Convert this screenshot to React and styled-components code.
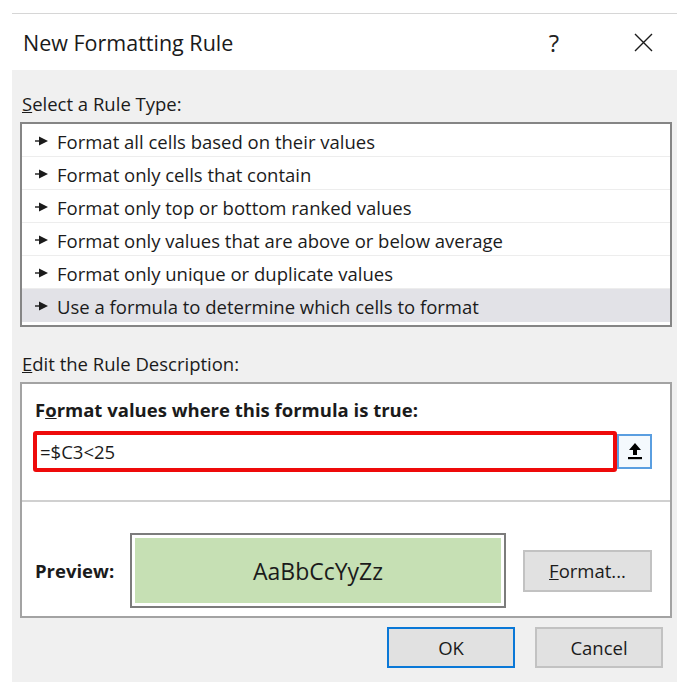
import React from 'react';
import styled, { createGlobalStyle } from 'styled-components';

const GlobalStyle = createGlobalStyle`
  body {
    margin: 0;
    background: #ffffff;
    font-family: "Open Sans", "Noto Sans", sans-serif;
    color: #1b1b1b;
  }
`;

const Page = styled.div`
  padding: 13px 8px 0 12px;
`;

const Dialog = styled.div`
  width: 665px;
  height: 669px;
  display: flex;
  flex-direction: column;
  border-top: 1px solid #d6d6d6;
  box-sizing: border-box;
`;

const TitleBar = styled.div`
  height: 56px;
  background: #ffffff;
  display: flex;
  align-items: center;
  padding-left: 11px;
  padding-right: 24px;
  flex-shrink: 0;
`;

const Title = styled.div`
  flex: 1;
  font-size: 21.5px;
  color: #1a1a1a;
`;

const Help = styled.div`
  font-size: 24px;
  color: #222;
  width: 24px;
  text-align: center;
  margin-right: 68px;
`;

const CloseIcon = styled.svg`
  width: 19px;
  height: 19px;
  display: block;
`;

const Body = styled.div`
  flex: 1;
  background: #f0f0f0;
  padding: 0 5px 0 8px;
  display: flex;
  flex-direction: column;
`;

const SectionLabel = styled.div`
  font-size: 18.5px;
  line-height: 22px;
  margin-top: ${(p) => p.$top}px;
  margin-left: 2px;
  margin-bottom: 7px;
  color: #1b1b1b;
`;

const ListBox = styled.div`
  height: 205px;
  box-sizing: border-box;
  border: 2px solid #858585;
  background: #ffffff;
  padding-bottom: 3px;
`;

const RuleRow = styled.div`
  height: 33px;
  box-sizing: border-box;
  display: flex;
  align-items: center;
  gap: 9px;
  padding: 2px 0 0 13px;
  font-size: 18.5px;
  border-bottom: 1px solid ${(p) => (p.$selected ? 'transparent' : '#ededed')};
  background: ${(p) => (p.$selected ? '#e2e2e7' : '#ffffff')};
  color: #1b1b1b;
`;

const Pointer = styled.svg`
  width: 13px;
  height: 10px;
  display: block;
  flex-shrink: 0;
`;

const DescBox = styled.div`
  height: 236px;
  box-sizing: border-box;
  border: 2px solid #a3a3a3;
  background: #ffffff;
  display: flex;
  flex-direction: column;
`;

const DescTop = styled.div`
  padding: 15px 0 0 11px;
  height: 118px;
  box-sizing: border-box;
  border-bottom: 2px solid #d0d0d0;
`;

const BoldLabel = styled.div`
  font-weight: 700;
  font-size: 18.5px;
  line-height: 22px;
  margin-left: 2px;
  margin-bottom: 10px;
`;

const InputRow = styled.div`
  display: flex;
  align-items: center;
`;

const FormulaInput = styled.div`
  width: 584px;
  height: 41px;
  box-sizing: border-box;
  border: 4px solid #ee0a0a;
  border-radius: 3px;
  display: flex;
  align-items: center;
  padding-left: 3px;
  font-size: 18.5px;
  color: #1b1b1b;
`;

const RefButton = styled.div`
  width: 35px;
  height: 35px;
  box-sizing: border-box;
  border: 2px solid #5a9ee0;
  background: #f4f9fd;
  display: flex;
  align-items: center;
  justify-content: center;
`;

const PreviewRow = styled.div`
  display: flex;
  align-items: center;
  padding: 31px 0 0 13px;
`;

const PreviewLabel = styled.div`
  width: 95px;
  font-weight: 700;
  font-size: 18.5px;
`;

const PreviewFrame = styled.div`
  width: 376px;
  height: 75px;
  box-sizing: border-box;
  border: 2px solid #7c7c7c;
  padding: 3px;
  background: #ffffff;
`;

const PreviewFill = styled.div`
  height: 100%;
  background: #c6e0b4;
  display: flex;
  align-items: center;
  justify-content: center;
  font-size: 23px;
  color: #1b1b1b;
`;

const Button = styled.div`
  width: ${(p) => p.$w || 128}px;
  height: ${(p) => p.$h || 41}px;
  box-sizing: border-box;
  background: #e1e1e1;
  border: ${(p) => (p.$primary ? '2px solid #0a78d7' : '2px solid #c2c2c2')};
  display: flex;
  align-items: center;
  justify-content: center;
  font-size: 18.5px;
  color: #1b1b1b;
  margin-left: ${(p) => p.$ml || 0}px;
`;

const ButtonRow = styled.div`
  display: flex;
  justify-content: flex-end;
  gap: 20px;
  margin-top: 9px;
  padding-right: 9px;
`;

const rules = [
  'Format all cells based on their values',
  'Format only cells that contain',
  'Format only top or bottom ranked values',
  'Format only values that are above or below average',
  'Format only unique or duplicate values',
  'Use a formula to determine which cells to format',
];

const PointerIcon = () => (
  <Pointer viewBox="0 0 13 10">
    <line x1="0" y1="5" x2="6" y2="5" stroke="#1b1b1b" strokeWidth="1.4" />
    <polygon points="4,0.5 13,5 4,9.5" fill="#1b1b1b" />
  </Pointer>
);

export default function App() {
  return (
    <>
      <GlobalStyle />
      <Page>
        <Dialog>
          <TitleBar>
            <Title>New Formatting Rule</Title>
            <Help>?</Help>
            <CloseIcon viewBox="0 0 19 19">
              <path d="M1 1 L18 18 M18 1 L1 18" stroke="#1b1b1b" strokeWidth="1.4" />
            </CloseIcon>
          </TitleBar>
          <Body>
            <SectionLabel $top={23}>
              <u>S</u>elect a Rule Type:
            </SectionLabel>
            <ListBox>
              {rules.map((r, i) => (
                <RuleRow key={r} $selected={i === rules.length - 1}>
                  <PointerIcon />
                  <span>{r}</span>
                </RuleRow>
              ))}
            </ListBox>
            <SectionLabel $top={26}>
              <u>E</u>dit the Rule Description:
            </SectionLabel>
            <DescBox>
              <DescTop>
                <BoldLabel>
                  F<u>o</u>rmat values where this formula is true:
                </BoldLabel>
                <InputRow>
                  <FormulaInput>=$C3&lt;25</FormulaInput>
                  <RefButton>
                    <svg width="14" height="17" viewBox="0 0 14 17">
                      <polygon points="7,0 13,7 9,7 9,12 5,12 5,7 1,7" fill="#000" />
                      <rect x="0" y="14" width="14" height="2.2" fill="#000" />
                    </svg>
                  </RefButton>
                </InputRow>
              </DescTop>
              <PreviewRow>
                <PreviewLabel>Preview:</PreviewLabel>
                <PreviewFrame>
                  <PreviewFill>AaBbCcYyZz</PreviewFill>
                </PreviewFrame>
                <Button $w={129} $h={42} $ml={17}>
                  <span>
                    <u>F</u>ormat...
                  </span>
                </Button>
              </PreviewRow>
            </DescBox>
            <ButtonRow>
              <Button $primary>OK</Button>
              <Button>Cancel</Button>
            </ButtonRow>
          </Body>
        </Dialog>
      </Page>
    </>
  );
}
